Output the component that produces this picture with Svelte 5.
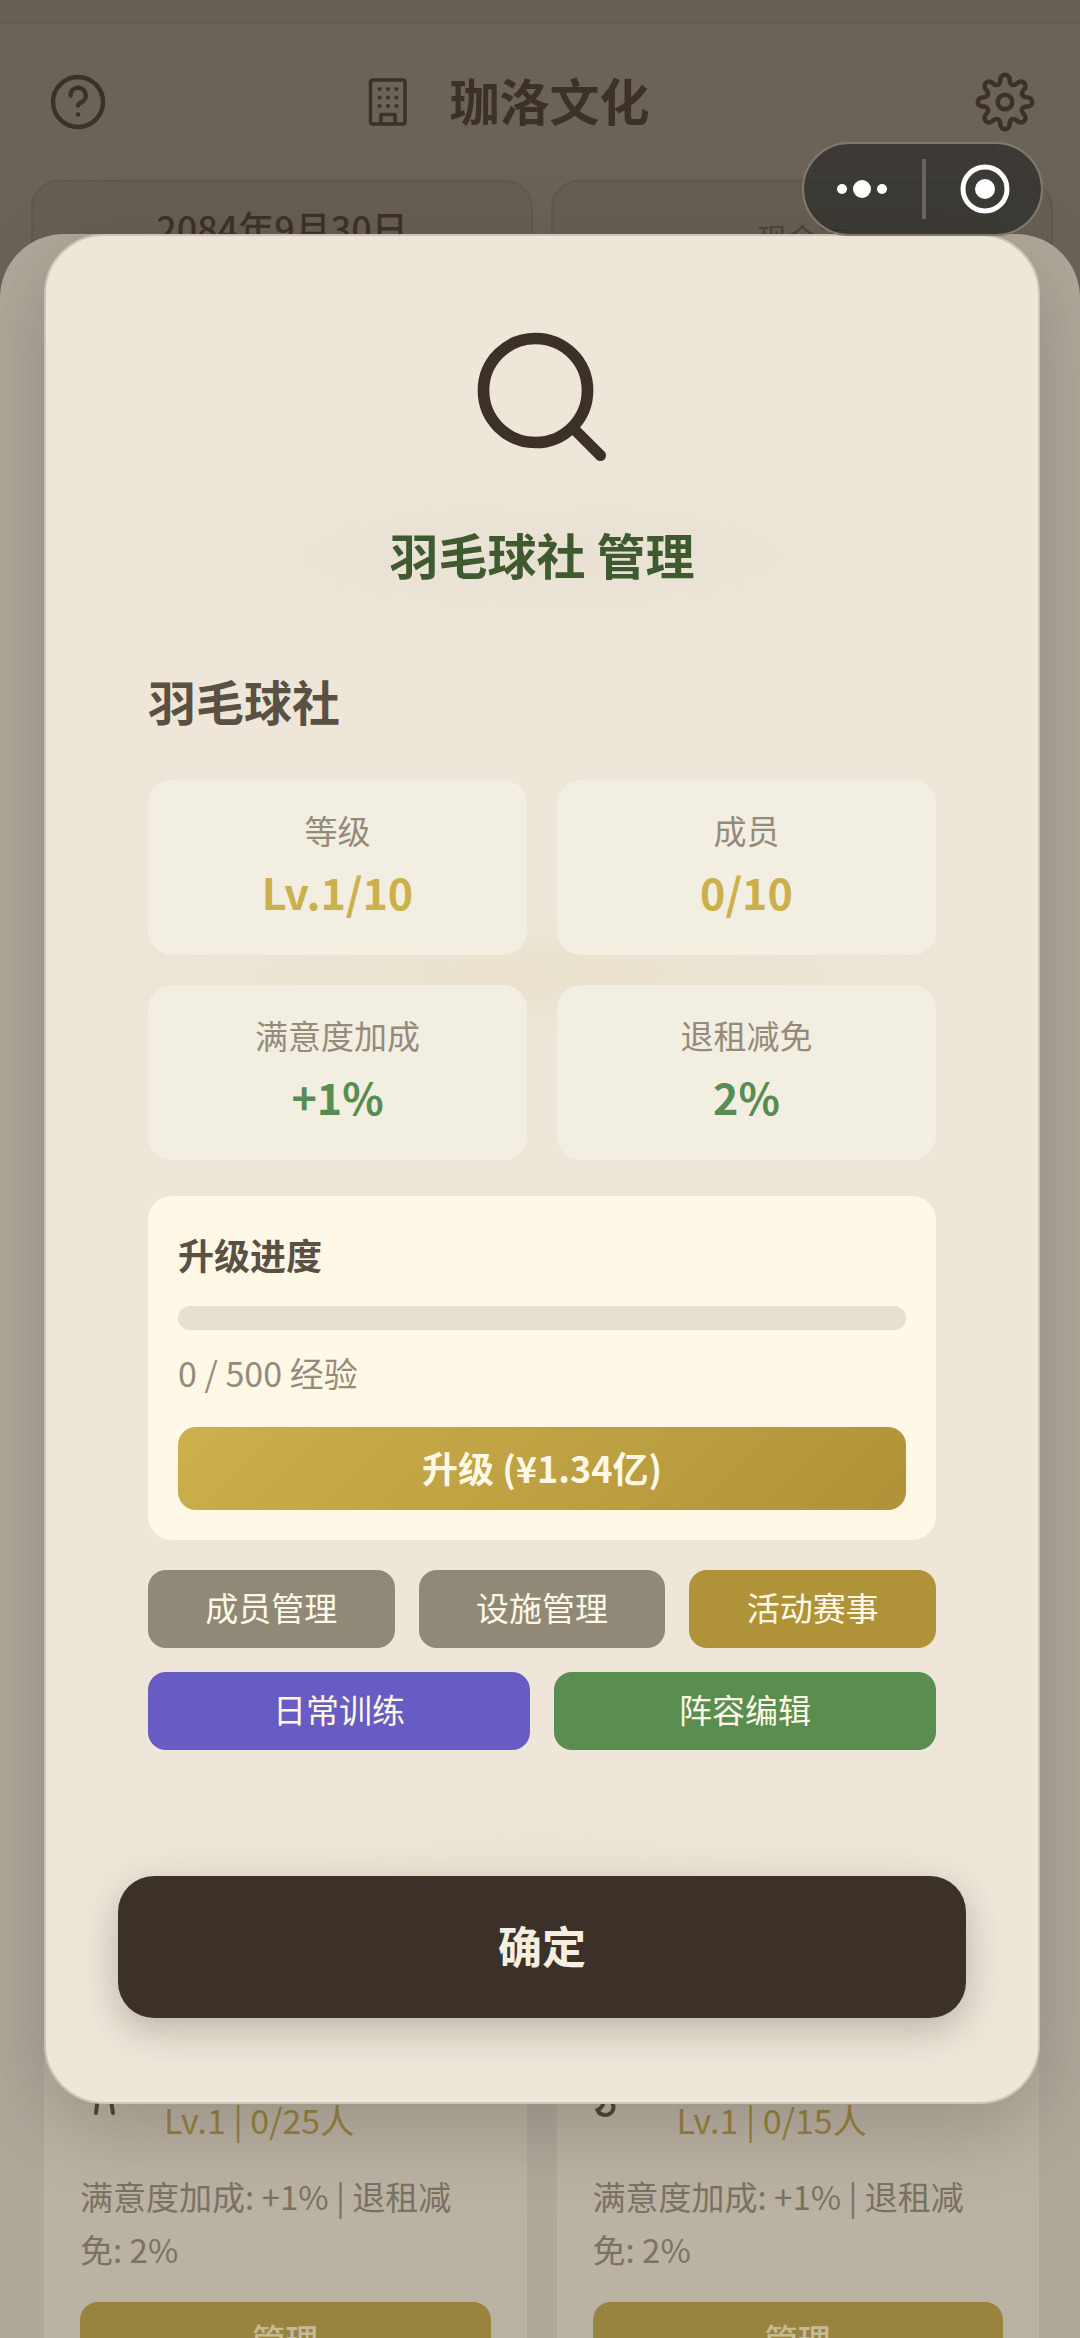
<script>
  const stats = [
    { label: '等级', value: 'Lv.1/10', tone: 'gold' },
    { label: '成员', value: '0/10', tone: 'gold' },
    { label: '满意度加成', value: '+1%', tone: 'green' },
    { label: '退租减免', value: '2%', tone: 'green' }
  ];
  const clubs = [
    { icon: 'runner', level: 'Lv.1 | 0/25人' },
    { icon: 'ribbon', level: 'Lv.1 | 0/15人' }
  ];
  const exp = { now: 0, max: 500 };

  // Gear outline: eight round teeth joined by round valleys.
  function gearPath() {
    const turn = (x, y, k) => {
      const a = (k * Math.PI) / 4;
      const px = x * Math.cos(a) - y * Math.sin(a);
      const py = x * Math.sin(a) + y * Math.cos(a);
      return `${(30 + px).toFixed(2)} ${(30 + py).toFixed(2)}`;
    };
    let d = `M${turn(-4.6, -22.6, 0)}`;
    for (let k = 0; k < 8; k++) {
      d += `A4.6 4.6 0 0 1 ${turn(4.6, -22.6, k)}`;
      d += `C${turn(4.8, -16.6, k)} ${turn(-4.8, -16.6, k + 1)} ${turn(-4.6, -22.6, k + 1)}`;
    }
    return d + 'Z';
  }
</script>

<div class="screen">
  <div class="home">
    <div class="strip"></div>
    <header>
      <button class="icon-btn" aria-label="帮助">
        <svg width="60" height="60" viewBox="0 0 60 60" fill="none" stroke="currentColor" stroke-width="4.5" stroke-linecap="round">
          <circle cx="30" cy="30" r="25" />
          <path d="M22.500 23.500a7.600 7.600 0 1 1 11 6.700c-2.300 1.200-3.500 2.300-3.500 3.300" />
          <path d="M30 42.500v.1" />
        </svg>
      </button>
      <h1>
        <svg width="48" height="48" viewBox="0 0 48 48" fill="none" stroke="currentColor" stroke-width="3.5" stroke-linejoin="round">
          <rect x="6.5" y="2" width="34.5" height="44" rx="2" />
          <path d="M17 46V36.5h14V46" />
          <g fill="currentColor" stroke="none">
            {#each [11, 19.5, 28] as cy}
              {#each [15.5, 24, 32.5] as cx}
                <circle {cx} {cy} r="2" />
              {/each}
            {/each}
          </g>
        </svg>
        <span>珈洛文化</span>
      </h1>
      <button class="icon-btn" aria-label="设置">
        <svg width="60" height="60" viewBox="0 0 60 60" fill="none" stroke="currentColor" stroke-width="4.5" stroke-linejoin="round">
          <circle cx="30" cy="30" r="7.3" />
          <path d={gearPath()} />
        </svg>
      </button>
    </header>
    <div class="summary">
      <div class="tile date">2084年9月30日</div>
      <div class="tile cash">现金流</div>
    </div>
  </div>

  <section class="sheet">
    <div class="clubs">
      {#each clubs as club}
        <article class="club">
          <div class="club-head">
            {#if club.icon === 'runner'}
              <svg width="60" height="60" viewBox="0 0 60 60" fill="none" stroke="currentColor" stroke-width="4" stroke-linecap="round">
                <path d="M19 30L16 54M29 30L33 54" />
              </svg>
            {:else}
              <svg width="60" height="60" viewBox="0 0 60 60" fill="none" stroke="currentColor" stroke-width="4" stroke-linecap="round">
                <path d="M11 40C11 46 9 49 4.500 51C6 55 9 56 13 56C20 55 23 48 18 42M27 42.500v.1" />
              </svg>
            {/if}
            <span class="club-level">{club.level}</span>
          </div>
          <p>满意度加成: +1% | 退租减免: 2%</p>
          <button class="club-btn">管理</button>
        </article>
      {/each}
    </div>
  </section>

  <div class="layer">
    <div class="modal" role="dialog" aria-modal="true" aria-labelledby="modal-title">
      <svg class="search" width="156" height="156" viewBox="0 0 24 24" fill="none" stroke="currentColor" stroke-linecap="round">
        <circle cx="11" cy="11" r="8" stroke-width="1.8" />
        <path d="M16.9 16.9L21 21" stroke-width="1.7" />
      </svg>
      <h2 id="modal-title">羽毛球社 管理</h2>

      <div class="body">
        <h3>羽毛球社</h3>
        <div class="stats">
          {#each stats as s}
            <div class="stat">
              <span class="label">{s.label}</span>
              <strong class={s.tone}>{s.value}</strong>
            </div>
          {/each}
        </div>

        <div class="upgrade">
          <h4>升级进度</h4>
          <div class="bar" role="progressbar" aria-label="升级进度" aria-valuenow={exp.now} aria-valuemin="0" aria-valuemax={exp.max}>
            <div class="fill" style="width: {(exp.now / exp.max) * 100}%"></div>
          </div>
          <span class="exp">{exp.now} / {exp.max} 经验</span>
          <button class="upgrade-btn">升级 (¥1.34亿)</button>
        </div>

        <div class="actions">
          <button class="act grey">成员管理</button>
          <button class="act grey">设施管理</button>
          <button class="act amber">活动赛事</button>
        </div>
        <div class="actions">
          <button class="act violet">日常训练</button>
          <button class="act leaf">阵容编辑</button>
        </div>
      </div>

      <button class="confirm">确定</button>
    </div>
  </div>

  <div class="capsule">
    <button aria-label="更多">
      <svg width="52" height="52" viewBox="0 0 52 52" fill="currentColor">
        <circle cx="6" cy="26" r="5" /><circle cx="26" cy="26" r="9" /><circle cx="46" cy="26" r="5" />
      </svg>
    </button>
    <i></i>
    <button aria-label="关闭">
      <svg width="52" height="52" viewBox="0 0 52 52" fill="currentColor">
        <circle cx="26" cy="26" r="22" fill="none" stroke="currentColor" stroke-width="5" /><circle cx="26" cy="26" r="10" />
      </svg>
    </button>
  </div>
</div>

<style>
  :global(body) {
    margin: 0;
    background: #6b6258;
  }
  .screen {
    display: grid;
    grid-template-columns: minmax(0, 1fr);
    position: relative;
    min-height: 100vh;
    overflow: hidden;
    font-family: 'Noto Sans CJK SC', sans-serif;
    color: #3b3128;
  }
  .screen * {
    box-sizing: border-box;
  }
  button {
    font-family: inherit;
    border: 0;
    padding: 0 0 4px;
    cursor: pointer;
  }
  h1, h2, h3, h4, p {
    margin: 0;
  }
  .home, .sheet, .layer {
    grid-area: 1 / 1;
  }

  .home {
    background: #6b6258;
  }
  .strip {
    height: 24px;
    background: #685f55;
    border-bottom: 1px solid #645b51;
  }
  header {
    display: flex;
    align-items: center;
    justify-content: space-between;
    height: 156px;
    padding: 0 45px 0 48px;
  }
  .icon-btn {
    display: flex;
    padding: 0;
    background: none;
    color: #3b3128;
  }
  h1 {
    display: flex;
    align-items: center;
    gap: 38px;
    margin-right: 70px;
    font-size: 50px;
    line-height: 72px;
    font-weight: 700;
  }
  h1 span {
    padding-bottom: 6px;
  }
  .summary {
    display: grid;
    grid-template-columns: 1fr 1fr;
    gap: 18px;
    padding: 0 27px 0 31px;
  }
  .tile {
    height: 140px;
    border: 2px solid #61584d;
    border-radius: 28px;
    background: #675e53;
    text-align: center;
  }
  .date {
    padding-top: 19px;
    font-size: 36px;
    line-height: 52px;
    font-weight: 500;
  }
  .cash {
    padding-top: 33px;
    font-size: 30px;
    line-height: 44px;
    color: #4c4339;
  }

  .sheet {
    display: flex;
    flex-direction: column;
    justify-content: flex-end;
    margin-top: 234px;
    padding: 0 41px 0 44px;
    border-radius: 64px 64px 0 0;
    background: #b0a89b;
    overflow: hidden;
  }
  .clubs {
    display: grid;
    grid-template-columns: 1fr 1fr;
    gap: 30px;
    margin-bottom: -78px;
  }
  .club {
    padding: 36px;
    border-radius: 24px;
    background: #bab3a4;
  }
  .club-head {
    display: flex;
    align-items: flex-end;
    gap: 24px;
    margin-bottom: 24px;
    color: #4c4337;
  }
  .club-head svg {
    margin-bottom: 27px;
  }
  .club-level {
    font-size: 34px;
    line-height: 53px;
    color: #96823c;
  }
  .club p {
    font-size: 33px;
    line-height: 53px;
    color: #7c7263;
  }
  .club-btn {
    width: 100%;
    height: 78px;
    margin-top: 26px;
    border-radius: 18px;
    background: #99843f;
    color: #c5bb98;
    font-size: 33px;
    font-weight: 500;
  }

  .layer {
    display: flex;
    align-items: flex-start;
    padding: 234px 40px 0 44px;
  }
  .modal {
    flex: 1;
    display: flex;
    flex-direction: column;
    align-items: center;
    padding: 83px 72px 84px;
    border: 2px solid #cdc5b7;
    border-radius: 60px;
    background:
      radial-gradient(460px 90px at 50% 320px, rgba(226, 219, 203, 0.4), transparent),
      radial-gradient(480px 60px at 50% 740px, rgba(230, 222, 195, 0.6), transparent),
      radial-gradient(460px 100px at 50% 1640px, rgba(230, 223, 200, 0.4), transparent),
      #ede6d9;
    box-shadow: 0 24px 80px rgba(59, 49, 41, 0.26);
  }
  .search {
    display: block;
  }
  h2 {
    margin-top: 43px;
    font-size: 49px;
    line-height: 72px;
    font-weight: 700;
    color: #3f5a2e;
  }
  .body {
    align-self: stretch;
    padding: 75px 30px 0;
  }
  h3 {
    font-size: 48px;
    line-height: 70px;
    font-weight: 700;
    color: #5a5043;
  }
  .stats {
    display: grid;
    grid-template-columns: 1fr 1fr;
    gap: 30px;
    margin-top: 45px;
  }
  .stat {
    display: flex;
    flex-direction: column;
    align-items: center;
    padding: 24px;
    height: 175px;
    border-radius: 24px;
    background: #f3eee2;
  }
  .label {
    font-size: 33px;
    line-height: 53px;
    color: #958b7b;
  }
  .stat strong {
    margin-top: 1px;
    font-size: 43px;
    line-height: 66px;
    font-weight: 700;
  }
  .gold { color: #ccb04c; }
  .green { color: #578d50; }

  .upgrade {
    display: flex;
    flex-direction: column;
    margin-top: 36px;
    padding: 30px;
    border-radius: 24px;
    background: #fff8e7;
  }
  h4 {
    font-size: 36px;
    line-height: 56px;
    font-weight: 700;
    color: #5a5043;
  }
  .bar {
    height: 24px;
    margin-top: 24px;
    border-radius: 12px;
    background: #e6dfd2;
    overflow: hidden;
  }
  .fill {
    height: 100%;
    background: #ccb04c;
  }
  .exp {
    margin-top: 16px;
    font-size: 34px;
    line-height: 53px;
    color: #958b7b;
  }
  .upgrade-btn {
    height: 83px;
    margin-top: 28px;
    border-radius: 18px;
    background: linear-gradient(135deg, #ccb04c, #b09338);
    color: #fff8e7;
    font-size: 36px;
    font-weight: 700;
  }
  .actions {
    display: flex;
    gap: 24px;
    margin-top: 24px;
  }
  .upgrade + .actions {
    margin-top: 30px;
  }
  .act {
    flex: 1;
    height: 78px;
    border-radius: 18px;
    color: #fff8e7;
    font-size: 33px;
  }
  .grey { background: #918978; }
  .amber { background: #b09338; }
  .violet { background: #675cc3; }
  .leaf { background: #5a8e50; }

  .confirm {
    align-self: stretch;
    height: 142px;
    margin-top: 126px;
    border-radius: 36px;
    background: #3b3128;
    color: #f5efe1;
    font-size: 44px;
    font-weight: 700;
    box-shadow: 0 12px 36px rgba(59, 49, 41, 0.28);
  }

  .capsule {
    position: absolute;
    top: 142px;
    right: 37px;
    display: flex;
    align-items: center;
    justify-content: space-between;
    width: 241px;
    height: 94px;
    padding: 0 30px 0 32px;
    border: 2px solid #7f7971;
    border-radius: 48px;
    background: rgba(45, 44, 40, 0.74);
    background-clip: padding-box;
  }
  .capsule button {
    display: flex;
    padding: 0;
    background: none;
    color: #fff;
  }
  .capsule i {
    width: 4px;
    height: 60px;
    background: #686560;
  }
</style>
